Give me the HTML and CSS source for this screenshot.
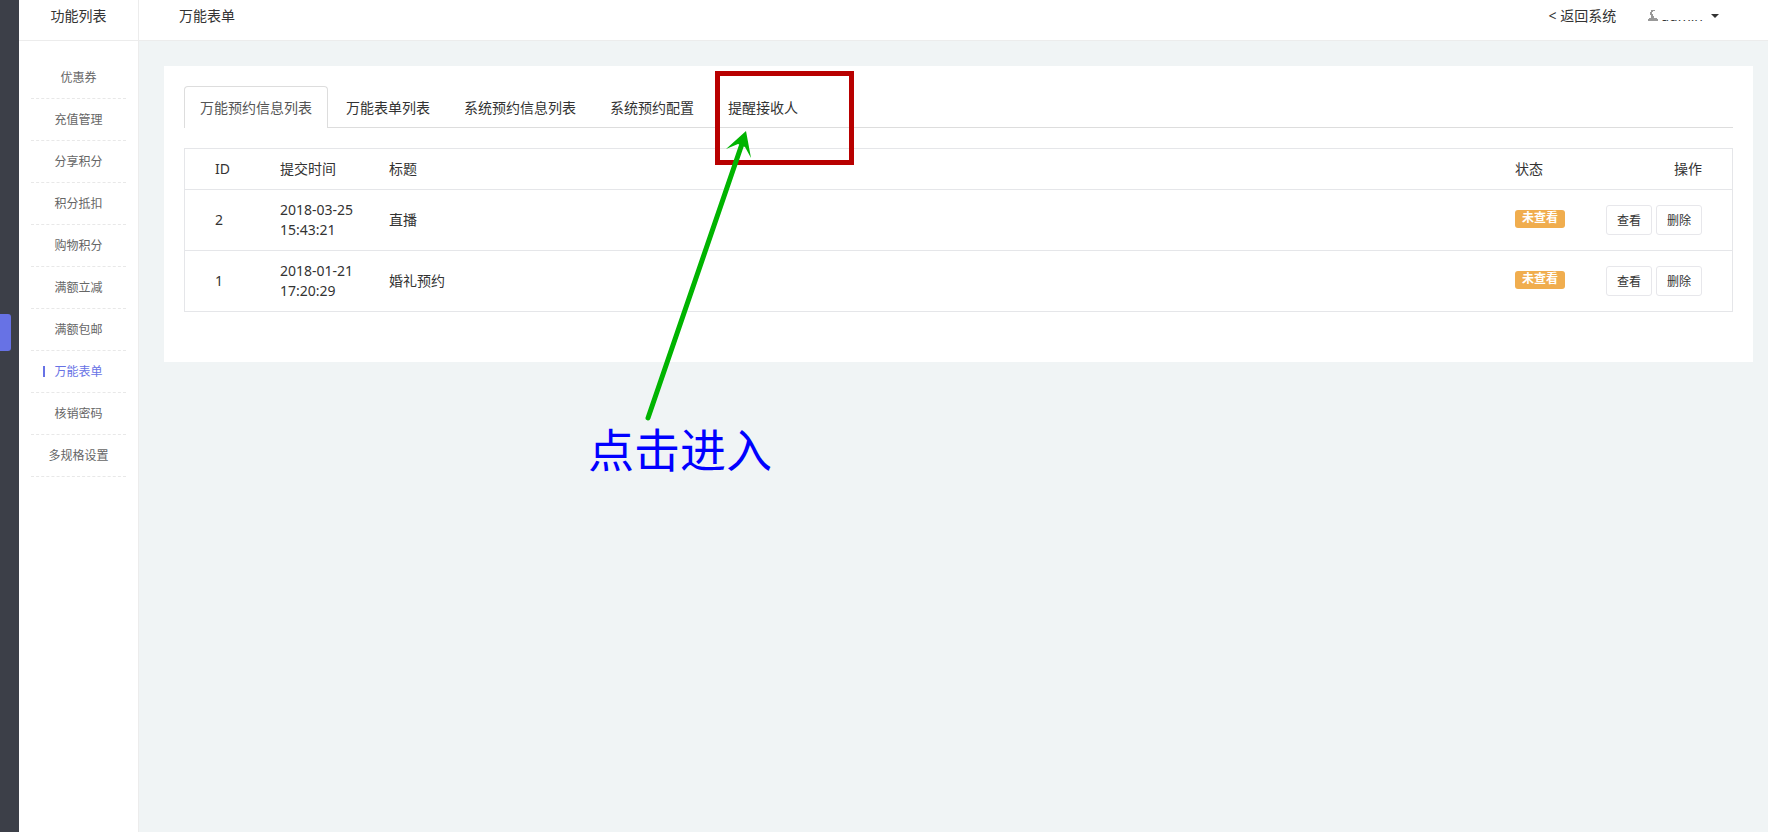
FILE: index.html
```html
<!DOCTYPE html>
<html lang="zh-CN">

<head>
    <meta charset="UTF-8">
    <meta name="viewport" content="width=device-width, initial-scale=1.0">
    <title>万能表单</title>
    <link rel="stylesheet" href="styles.css">
</head>

<body>

    <div class="wrap">
        <div class="rail">
            <div class="rail-on"></div>
        </div>

        <div class="side">
            <div class="side-title">功能列表</div>
            <ul class="menu">
                <li><a href="#">优惠券</a></li>
                <li><a href="#">充值管理</a></li>
                <li><a href="#">分享积分</a></li>
                <li><a href="#">积分抵扣</a></li>
                <li><a href="#">购物积分</a></li>
                <li><a href="#">满额立减</a></li>
                <li><a href="#">满额包邮</a></li>
                <li><a href="#" class="on">万能表单</a></li>
                <li><a href="#">核销密码</a></li>
                <li><a href="#">多规格设置</a></li>
            </ul>
        </div>

        <div class="main">
            <div class="top">
                <div class="top-title">万能表单</div>
                <a class="back" href="#">&lt; 返回系统</a>
                <a class="user" href="#">
                    <svg width="10" height="12" viewBox="0 0 10 12">
                        <path d="M3 0H7V1H5V2H4V4H5V6H6V8H9V9H10V11H0V9H1V8H3V6H3V5H2V2H3z" fill="#999" />
                    </svg>
                    <span class="name">admin</span>
                    <i class="caret"></i>
                </a>
            </div>

            <div class="panel">
                <div class="tabs">
                    <a href="#" class="active">万能预约信息列表</a>
                    <a href="#">万能表单列表</a>
                    <a href="#">系统预约信息列表</a>
                    <a href="#">系统预约配置</a>
                    <a href="#">提醒接收人</a>
                </div>

                <table class="list">
                    <thead>
                        <tr>
                            <th class="c-id">ID</th>
                            <th class="c-time">提交时间</th>
                            <th>标题</th>
                            <th class="c-state">状态</th>
                            <th class="c-act">操作</th>
                        </tr>
                    </thead>
                    <tbody>
                        <tr>
                            <td class="c-id">2</td>
                            <td>2018-03-25 15:43:21</td>
                            <td>直播</td>
                            <td><span class="label">未查看</span></td>
                            <td class="c-act">
                                <div class="btns">
                                    <button type="button">查看</button>
                                    <button type="button">删除</button>
                                </div>
                            </td>
                        </tr>
                        <tr>
                            <td class="c-id">1</td>
                            <td>2018-01-21 17:20:29</td>
                            <td>婚礼预约</td>
                            <td><span class="label">未查看</span></td>
                            <td class="c-act">
                                <div class="btns">
                                    <button type="button">查看</button>
                                    <button type="button">删除</button>
                                </div>
                            </td>
                        </tr>
                    </tbody>
                </table>
            </div>
        </div>
    </div>

    <!-- marks over the page -->
    <div class="mark-box"></div>
    <svg class="mark-arrow" width="120" height="300" viewBox="640 125 120 300">
        <path d="M648 418L743 141" stroke="#00b400" stroke-width="5" stroke-linecap="round" fill="none" />
        <path d="M746 131L726 149L738 144L745 147L751 158Z" fill="#00b400" />
    </svg>
    <div class="mark-text">点击进入</div>

</body>

</html>
```

FILE: styles.css
```css
body {
    margin: 0;
    background-color: #f0f4f5;
    color: #333;
    font-family: "Noto Sans", "Noto Sans CJK SC", sans-serif;
    font-size: 14px;
    line-height: 20px;
}

a {
    color: #333;
    text-decoration: none;
}

.wrap {
    display: flex;
    min-height: 100vh;
}

.rail {
    width: 19px;
    box-sizing: border-box;
    padding-top: 314px;
    background-color: #3c3f48;
}

.rail-on {
    width: 11px;
    height: 37px;
    border-radius: 0 3px 3px 0;
    background-color: #6772e5;
}

.side {
    width: 119px;
    background-color: #fff;
    border-right: 1px solid #ececec;
}

.side-title {
    height: 40px;
    line-height: 32px;
    text-align: center;
    border-bottom: 1px solid #ececec;
}

.menu {
    list-style: none;
    margin: 16px 12px 0;
    padding: 0;
}

.menu li {
    border-bottom: 1px dashed #e8e8e8;
    text-align: center;
    font-size: 12px;
    line-height: 41px;
}

.menu a {
    display: block;
    color: #666;
}

.menu a.on {
    position: relative;
    color: #6772e5;
}

.menu a.on::before {
    content: "";
    position: absolute;
    left: 12px;
    top: 15px;
    width: 2px;
    height: 11px;
    background-color: #6772e5;
}

.main {
    flex: 1;
}

.top {
    display: flex;
    height: 40px;
    line-height: 32px;
    padding: 0 49px 0 40px;
    background-color: #fff;
    border-bottom: 1px solid #ececec;
}

.top-title {
    flex: 1;
}

.user {
    display: flex;
    align-items: center;
    gap: 3px;
    height: 32px;
    margin-left: 32px;
}

/* the upper part of the name is covered */
.name {
    position: relative;
    margin-right: 5px;
}

.name::after {
    content: "";
    position: absolute;
    left: 0;
    right: 0;
    top: 0;
    height: 20px;
    background-color: #fff;
}

.caret {
    border-top: 4px solid #333;
    border-left: 4px solid transparent;
    border-right: 4px solid transparent;
}

.panel {
    margin: 25px 15px 0 25px;
    padding: 20px 20px 50px;
    background-color: #fff;
}

.tabs {
    display: flex;
    gap: 2px;
    margin-bottom: 20px;
    border-bottom: 1px solid #ddd;
}

.tabs a {
    padding: 11px 15px 9px;
    border: 1px solid transparent;
    border-bottom: 0;
}

.tabs a.active {
    margin-bottom: -1px;
    padding-bottom: 10px;
    color: #555;
    border-color: #ddd;
    border-radius: 4px 4px 0 0;
    background-color: #fff;
}

.list {
    width: 100%;
    table-layout: fixed;
    border-collapse: collapse;
    border: 1px solid #e5e6e9;
}

.list th,
.list td {
    padding: 10px 8px;
    border-bottom: 1px solid #e5e6e9;
    font-weight: normal;
    text-align: left;
}

.list .c-id {
    width: 49px;
    padding-left: 30px;
}

.c-time {
    width: 93px;
}

.c-state {
    width: 74px;
}

.list .c-act {
    width: 97px;
    padding-right: 30px;
    text-align: right;
}

.label {
    display: block;
    width: 50px;
    height: 18px;
    margin-bottom: 2px;
    border-radius: 3px;
    background-color: #f0ad4e;
    color: #fff;
    font-size: 12px;
    font-weight: bold;
    line-height: 16px;
    text-align: center;
}

.btns {
    display: flex;
    justify-content: flex-end;
    gap: 4px;
}

.btns button {
    height: 30px;
    padding: 0 10px;
    border: 1px solid #e7e7eb;
    border-radius: 3px;
    background-color: #fff;
    color: #333;
    font-family: inherit;
    font-size: 12px;
}

.mark-box {
    position: absolute;
    left: 715px;
    top: 71px;
    width: 129px;
    height: 84px;
    border: 5px solid #b80000;
}

.mark-arrow {
    position: absolute;
    left: 640px;
    top: 125px;
}

.mark-text {
    position: absolute;
    left: 588px;
    top: 419px;
    color: #00f;
    font-size: 46px;
    line-height: 60px;
}
```
